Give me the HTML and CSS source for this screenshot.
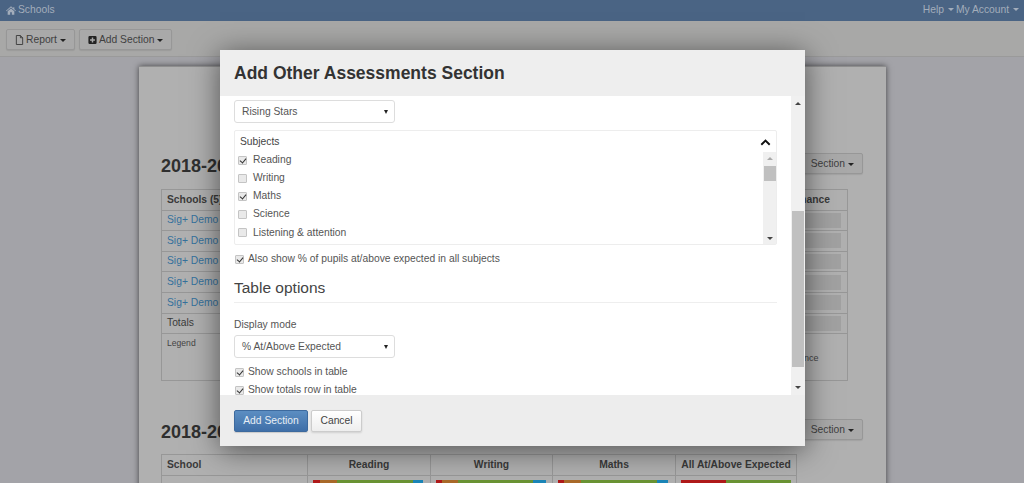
FILE: index.html
```html
<!DOCTYPE html>
<html lang="en">
<head>
<meta charset="utf-8">
<title>Schools</title>
<link rel="stylesheet" href="styles.css">
</head>
<body>
<nav class="navbar">
  <a class="brand"><svg class="home" viewBox="0 0 12 10"><path d="M6 0 0 5.2l.6.7L6 1.3l5.4 4.6.6-.7-2-1.7V1H8.700v1.300zM2 6v4h3V7h2v3h3V6L6 2.600z"/></svg>Schools</a>
  <div class="nav-right"><a>Help <i class="caret"></i></a><a>My Account <i class="caret"></i></a></div>
</nav>
<div class="toolbar">
  <button class="btn bg-btn"><svg class="ico" viewBox="0 0 10 11"><path d="M1.500.5h4.500l2.500 2.500v7.500h-7zM6 .5V3h2.500" fill="none" stroke="#3a3a3a"/></svg>Report <i class="caret"></i></button>
  <button class="btn bg-btn"><svg class="ico" viewBox="0 0 11 11"><path fill-rule="evenodd" fill="#222" d="M2 .5h7A1.500 1.500 0 0 1 10.500 2v7A1.500 1.500 0 0 1 9 10.500H2A1.500 1.500 0 0 1 .5 9V2A1.500 1.500 0 0 1 2 .5zM4.600 2.500v2.100H2.500v1.800h2.100v2.100h1.800V6.400h2.100V4.600H6.400V2.500z"/></svg>Add Section <i class="caret"></i></button>
</div>
<main class="main">
  <div class="paper">
    <section class="sec sec-first">
      <div class="sec-head"><h2>2018-2019</h2><button class="btn bg-btn">Section <i class="caret"></i></button></div>
      <table class="tbl tbl-a">
        <tr><th class="first">Schools (5)</th><th class="perf">Performance</th></tr>
        <tr><td><a>Sig+ Demo</a></td><td class="bar-cell"><span class="ghost"></span></td></tr>
        <tr><td><a>Sig+ Demo</a></td><td class="bar-cell"><span class="ghost"></span></td></tr>
        <tr><td><a>Sig+ Demo</a></td><td class="bar-cell"><span class="ghost"></span></td></tr>
        <tr><td><a>Sig+ Demo</a></td><td class="bar-cell"><span class="ghost"></span></td></tr>
        <tr><td><a>Sig+ Demo</a></td><td class="bar-cell"><span class="ghost"></span></td></tr>
        <tr><td>Totals</td><td class="bar-cell"><span class="ghost"></span></td></tr>
        <tr class="legend"><td><small>Legend</small></td><td class="legend-r"><small>Performance</small></td></tr>
      </table>
    </section>
    <section class="sec sec-second">
      <div class="sec-head"><h2>2018-2019</h2><button class="btn bg-btn">Section <i class="caret"></i></button></div>
      <table class="tbl tbl-b">
        <tr><th class="first">School</th><th>Reading</th><th>Writing</th><th>Maths</th><th>All At/Above Expected</th></tr>
        <tr>
          <td></td>
          <td><div class="stack"><b class="r s7"></b><b class="o s17"></b><b class="g s76"></b><b class="bl s10"></b></div></td>
          <td><div class="stack"><b class="r s6"></b><b class="o s16"></b><b class="g s75"></b><b class="bl s13"></b></div></td>
          <td><div class="stack"><b class="r s6"></b><b class="o s17"></b><b class="g s76"></b><b class="bl s11"></b></div></td>
          <td><div class="stack"><b class="r s45"></b><b class="g s65"></b></div></td>
        </tr>
      </table>
    </section>
  </div>
</main>

<div class="modal">
  <header class="modal-head"><h1>Add Other Assessments Section</h1></header>
  <div class="modal-body">
    <div class="modal-content">
      <div class="select"><span>Rising Stars</span><i class="sel-arrow"></i></div>
      <div class="panel">
        <div class="panel-head"><span>Subjects</span><svg class="chev" viewBox="0 0 12 8"><path d="M1.200 6.500 6 1.800l4.800 4.700" fill="none" stroke="#111" stroke-width="2.200"/></svg></div>
        <div class="panel-body">
          <ul class="subjects">
            <li><input type="checkbox" checked><label>Reading</label></li>
            <li><input type="checkbox"><label>Writing</label></li>
            <li><input type="checkbox" checked><label>Maths</label></li>
            <li><input type="checkbox"><label>Science</label></li>
            <li><input type="checkbox"><label>Listening &amp; attention</label></li>
          </ul>
          <div class="sb sb-inner"><i class="up"></i><span class="thumb"></span><i class="down"></i></div>
        </div>
      </div>
      <div class="check also"><input type="checkbox" checked><label>Also show % of pupils at/above expected in all subjects</label></div>
      <h3>Table options</h3>
      <div class="field-label">Display mode</div>
      <div class="select"><span>% At/Above Expected</span><i class="sel-arrow"></i></div>
      <div class="check c1"><input type="checkbox" checked><label>Show schools in table</label></div>
      <div class="check c2"><input type="checkbox" checked><label>Show totals row in table</label></div>
    </div>
    <div class="sb sb-outer"><i class="up"></i><span class="thumb"></span><i class="down"></i></div>
  </div>
  <footer class="modal-foot">
    <button class="btn primary">Add Section</button>
    <button class="btn cancel">Cancel</button>
  </footer>
</div>
</body>
</html>
```
FILE: styles.css
```css
* { box-sizing: border-box; }
html, body { margin: 0; height: 483px; overflow: hidden; }
body { background: #a3a3a8; font: 10.300px/1.4 "Liberation Sans", Arial, sans-serif; color: #3a3a3a; }
i { font-style: normal; }

.navbar { height: 21px; background: #4a6484; display: flex; justify-content: space-between; align-items: center; padding: 0 5px 0 6px; color: #a3adbb; }
.brand { display: flex; align-items: center; gap: 2px; }
.home { width: 10px; height: 9px; fill: #a3adbb; }
.nav-right { display: flex; gap: 2px; }
.caret { display: inline-block; width: 0; height: 0; border: 3px solid transparent; border-top-color: currentColor; border-bottom-width: 0; vertical-align: 2px; margin-left: 1px; }

.toolbar { height: 36px; background: #a8a8a7; border-bottom: 1px solid #9a9a9a; padding: 8px 6px 0; display: flex; gap: 4px; align-items: flex-start; }
.btn { font: 10.300px/1 "Liberation Sans", Arial, sans-serif; height: 21px; border-radius: 2px; padding: 1px 8px 0; display: inline-flex; align-items: center; justify-content: center; }
.bg-btn { background: #a9a9a9; border: 1px solid #979797; color: #3f3f3f; box-shadow: 0 1px 1px rgba(0,0,0,.08); gap: 2px; }
.bg-btn .caret { color: #222; margin-left: 1px; }
.ico { width: 9px; height: 10px; }

.main { padding: 9px 0 0 139px; }
.paper { width: 747px; height: 600px; background: #b0b0b0; box-shadow: 0 0 6px rgba(0,0,0,.6); border-top: 1px solid #8e8e8e; padding: 86px 23px 0 22px; }
.sec-head { display: flex; justify-content: space-between; align-items: center; height: 21px; }
.sec-head h2 { margin: 5px 0 0; font-size: 18px; line-height: 1; font-weight: 700; color: #2f2f2f; }
.sec-second { margin-top: 38px; }

.tbl { border-collapse: collapse; table-layout: fixed; color: #3a3a3a; }
.tbl th, .tbl td { border: 1px solid #979797; padding: 0 5px; height: 20.6px; font-size: 10.300px; text-align: left; }
.tbl a { color: #35709c; }
.tbl-a { width: 687px; margin-top: 15px; }
.tbl-a .first { width: 600px; }
.tbl-a .perf { text-align: right; padding-right: 18px; }
.tbl .bar-cell { padding: 2px 6px; }
.ghost { display: block; height: 15px; background: #a1a1a1; }
.tbl .legend td { height: 47px; vertical-align: top; padding-top: 2px; }
.legend small { font-size: 8.600px; color: #444; }
.tbl .legend .legend-r { vertical-align: middle; text-align: right; padding-right: 30px; }
.tbl .legend .legend-r small { font-size: 9px; }

.tbl-b { width: 636px; margin-top: 14px; }
.tbl-b th { text-align: center; height: 21px; padding: 0 2px; }
.tbl-b .first { width: 146px; text-align: left; padding-left: 5px; }
.tbl-b th:nth-child(2) { width: 123px; }
.tbl-b th:nth-child(3) { width: 122px; }
.tbl-b th:nth-child(4) { width: 123px; }
.tbl-b td { height: 30px; vertical-align: top; padding: 4px 6px 0 5px; }
.stack { display: flex; width: 110px; height: 9px; }
.stack b { display: block; height: 100%; }
.r { background: #b01a1a; } .o { background: #aa6a2a; } .g { background: #6a9434; } .bl { background: #1b86b8; }
.s6 { width: 6px; } .s7 { width: 7px; } .s10 { width: 10px; } .s11 { width: 11px; } .s13 { width: 13px; } .s16 { width: 16px; } .s17 { width: 17px; }
.s45 { width: 45px; } .s65 { width: 65px; } .s75 { width: 75px; } .s76 { width: 76px; }

.modal { position: fixed; left: 220px; top: 50px; width: 585px; height: 396px; background: #fff; display: flex; flex-direction: column; box-shadow: 0 4px 28px rgba(0,0,0,.55); }
.modal-head { height: 46px; background: #eee; padding: 1px 14px 0; display: flex; align-items: center; }
.modal-head h1 { margin: 0; font-size: 17.500px; line-height: 1; font-weight: 700; color: #333; }
.modal-body { height: 299px; display: flex; background: #fff; }
.modal-content { flex: 1; overflow: hidden; padding: 4px 14px 0; color: #555; }
.modal-foot { height: 51px; background: #ededed; padding: 15px 14px 0; display: flex; gap: 3px; align-items: flex-start; }
.primary { width: 74px; height: 22px; background: linear-gradient(#5c8ec2, #3f6fa8); border: 1px solid #3d6a9e; color: #e8eef5; box-shadow: 0 1px 1px rgba(0,0,0,.15); padding: 0; }
.cancel { width: 51px; height: 22px; background: linear-gradient(#fff, #eee); border: 1px solid #ccc; color: #444; box-shadow: 0 1px 2px rgba(0,0,0,.12); padding: 0; }

.select { width: 161px; height: 23px; background: #fff; border: 1px solid #ddd; border-radius: 3px; padding: 1px 7px 0; display: flex; align-items: center; justify-content: space-between; color: #555; }
.sel-arrow { width: 0; height: 0; border: 2.500px solid transparent; border-top: 4px solid #222; border-bottom-width: 0; margin-right: -1px; }

.panel { width: 543px; height: 115px; margin-top: 7px; border: 1px solid #ededed; border-radius: 2px; }
.panel-head { height: 21px; display: flex; justify-content: space-between; align-items: center; padding: 1px 5px 0 5px; color: #444; }
.chev { width: 11px; height: 7px; }
.panel-body { display: flex; height: 92px; }
.subjects { list-style: none; margin: -1px 0 0; padding: 0 0 0 3px; flex: 1; }
.subjects li { display: flex; align-items: center; height: 18.200px; gap: 6px; }
input[type=checkbox] { appearance: none; -webkit-appearance: none; margin: 0; width: 9px; height: 9px; background: #e9e9e9; border: 1px solid #c4c4c4; border-radius: 1px; position: relative; flex: none; }
input[type=checkbox]:checked::after { content: ""; position: absolute; left: 2px; top: 0; width: 3px; height: 5px; border: solid #333; border-width: 0 1.500px 1.500px 0; transform: rotate(40deg); }

.check { display: flex; align-items: center; gap: 4px; padding-left: 1px; }
.also { margin-top: 7px; height: 15px; }
h3 { margin: 12px 0 0; font-size: 15.500px; line-height: 18px; font-weight: 400; color: #444; padding-bottom: 5px; border-bottom: 1px solid #eee; }
.field-label { margin-top: 14px; line-height: 15px; margin-bottom: 3px; color: #555; }
.c1 { margin-top: 7px; height: 15px; }
.c2 { margin-top: 3px; height: 15px; }

.sb { background: #f0f0f0; position: relative; flex: none; }
.sb .thumb { position: absolute; display: block; background: #c0c0c0; }
.sb .up, .sb .down { position: absolute; width: 0; height: 0; border: 3px solid transparent; left: 50%; margin-left: -3px; }
.sb .up { border-bottom: 3px solid #444; border-top-width: 0; }
.sb .down { border-top: 3px solid #444; border-bottom-width: 0; }
.sb-outer { width: 14px; height: 299px; }
.sb-outer .up { top: 6px; }
.sb-outer .down { bottom: 6px; }
.sb-outer .thumb { left: 1px; right: 1px; top: 115px; height: 156px; }
.sb-inner { width: 13px; height: 92px; }
.sb-inner .up { top: 5px; border-bottom-color: #aaa; }
.sb-inner .down { bottom: 4px; }
.sb-inner .thumb { left: 1px; right: 0; top: 14px; height: 15px; }
```
